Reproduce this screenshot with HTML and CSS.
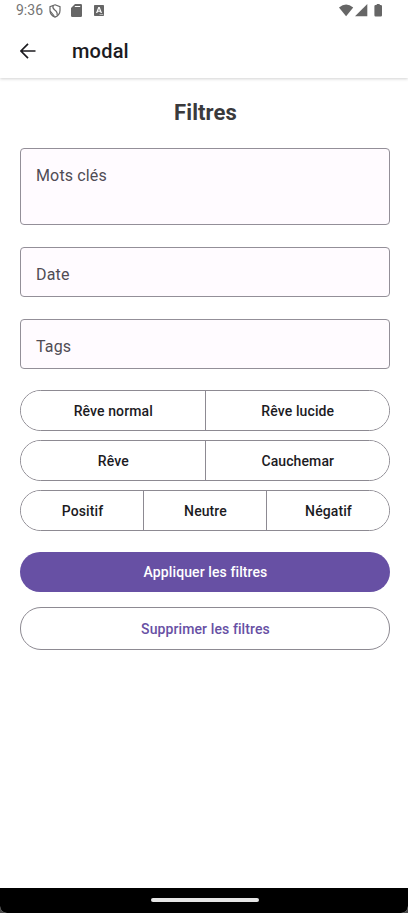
FILE: index.html
```html
<!DOCTYPE html>
<html lang="fr">
<head>
<meta charset="utf-8">
<title>modal</title>
<link rel="stylesheet" href="styles.css">
</head>
<body>
<div class="screen">
  <header class="top">
    <div class="status">
      <span class="clock">9:36</span>
      <svg class="shield" viewBox="0 0 12 14"><path d="M6 .8 11 2.6v3.8c0 3-2 5.400-5 6.700-3-1.300-5-3.700-5-6.700V2.600z"/><path d="M4.200 1.600C1.800 6.500 9.800 5.200 8 11.200M1.200 7 5.200 12"/></svg>
      <svg class="sd" viewBox="0 0 11 13"><path fill-rule="evenodd" d="M4 0h5.800Q11 0 11 1.200v10.600q0 1.200-1.200 1.200H1.200Q0 13 0 11.800V4zM3.800 1.900v1.200h5.400V1.900z"/></svg>
      <svg class="keyb" viewBox="0 0 10 11"><path fill-rule="evenodd" d="M.8 0h8.400q.8 0 .8.800v9.400q0 .8-.8.800H.8q-.8 0-.8-.8V.8Q0 0 .8 0zM4.300 2 2 8h1.300l.5-1.300h2.400L6.700 8H8L5.700 2zM5 3.500l.8 2.200H4.200zM5.500 9.200v.6h3.700v-.6z"/></svg>
      <svg class="signals" viewBox="0 0 44 14"><path d="M0 3.400Q7.100-2.400 14.200 3.400L7.100 12.300z"/><path d="M28.300 0v12.300H16z"/><path d="M37.700 0h3v1h1.100q1.200 0 1.200 1.200v9.100q0 1.200-1.200 1.200h-5.200q-1.200 0-1.200-1.200V2.200q0-1.200 1.200-1.200h1.100z"/></svg>
    </div>
    <div class="appbar">
      <svg class="back" viewBox="0 0 16 16"><path d="M15.500 8H1.200M8 .9.900 8 8 15.100"/></svg>
      <h1>modal</h1>
    </div>
  </header>
  <main>
    <h2>Filtres</h2>
    <div class="field tall">Mots clés</div>
    <div class="field">Date</div>
    <div class="field">Tags</div>
    <div class="segments"><button>Rêve normal</button><button>Rêve lucide</button></div>
    <div class="segments"><button>Rêve</button><button>Cauchemar</button></div>
    <div class="segments"><button>Positif</button><button>Neutre</button><button>Négatif</button></div>
    <button class="action filled">Appliquer les filtres</button>
    <button class="action outlined">Supprimer les filtres</button>
  </main>
  <footer><span></span></footer>
</div>
</body>
</html>
```
FILE: styles.css
```css
* { box-sizing: border-box; }
body { margin: 0; background: #4a4a4a; font-family: Roboto, sans-serif; color: #1c1b1f; }
.screen { height: 913px; display: flex; flex-direction: column; background: #fff; border-radius: 0 0 7px 7px; overflow: hidden; }
.top { height: 78px; flex: none; background: #fff; box-shadow: 0 1px 3px rgba(0,0,0,.18); }
.status { height: 24px; display: flex; padding: 0 25px 0 16px; fill: #666; color: #757575; }
.clock { width: 33px; font-size: 14px; line-height: 21px; }
.shield { width: 12px; height: 14px; margin-top: 4px; fill: none; stroke: #666; stroke-width: 1.2; }
.sd { width: 11px; height: 13px; margin: 4px 0 0 10px; }
.keyb { width: 10px; height: 11px; margin: 5px 0 0 12px; }
.signals { width: 44px; height: 14px; margin: 4px 0 0 auto; }
.appbar { height: 54px; display: flex; align-items: center; padding-left: 20px; }
.back { width: 16px; height: 16px; fill: none; stroke: #1c1b1f; stroke-width: 1.7; }
h1 { margin: 0 0 0 36px; font-size: 20px; line-height: 24px; font-weight: 500; letter-spacing: .2px; }
main { flex: 1; display: flex; flex-direction: column; padding: 20px 18px 0 20px; }
h2 { margin: 0 0 20px; padding-left: 1px; font-size: 22px; line-height: 30px; font-weight: 700; letter-spacing: .1px; color: #3a3a3c; text-align: center; }
.field { height: 50px; margin-bottom: 22px; padding: 17px 15px 0; border: 1px solid #938f98; border-radius: 4px; background: #fffbff; color: #504c55; font-size: 16px; line-height: 20px; letter-spacing: .15px; }
.tall { height: 77px; }
.field:nth-of-type(3) { margin-bottom: 21px; }
button { font: 500 14px/20px Roboto, sans-serif; letter-spacing: .1px; color: #1c1b1f; background: #fff; }
.segments { display: flex; height: 41px; margin-bottom: 9px; border: 1px solid #8d8a92; border-radius: 21px; overflow: hidden; }
.segments button { flex: 1 1 0; padding: 0 0 0 1px; border: 0; }
.segments button + button { border-left: 1px solid #8d8a92; }
.action { border-radius: 21px; padding: 0 0 0 1px; }
.filled { height: 40px; margin-top: 12px; border: 0; background: #6750a4; color: #fff; }
.outlined { height: 43px; margin-top: 15px; border: 1px solid #8d8a92; color: #6750a4; }
footer { height: 25px; flex: none; display: flex; justify-content: center; padding-top: 10px; background: #000; }
footer span { width: 108px; height: 4px; margin-left: 2px; border-radius: 2px; background: #e6e6e6; }
```
